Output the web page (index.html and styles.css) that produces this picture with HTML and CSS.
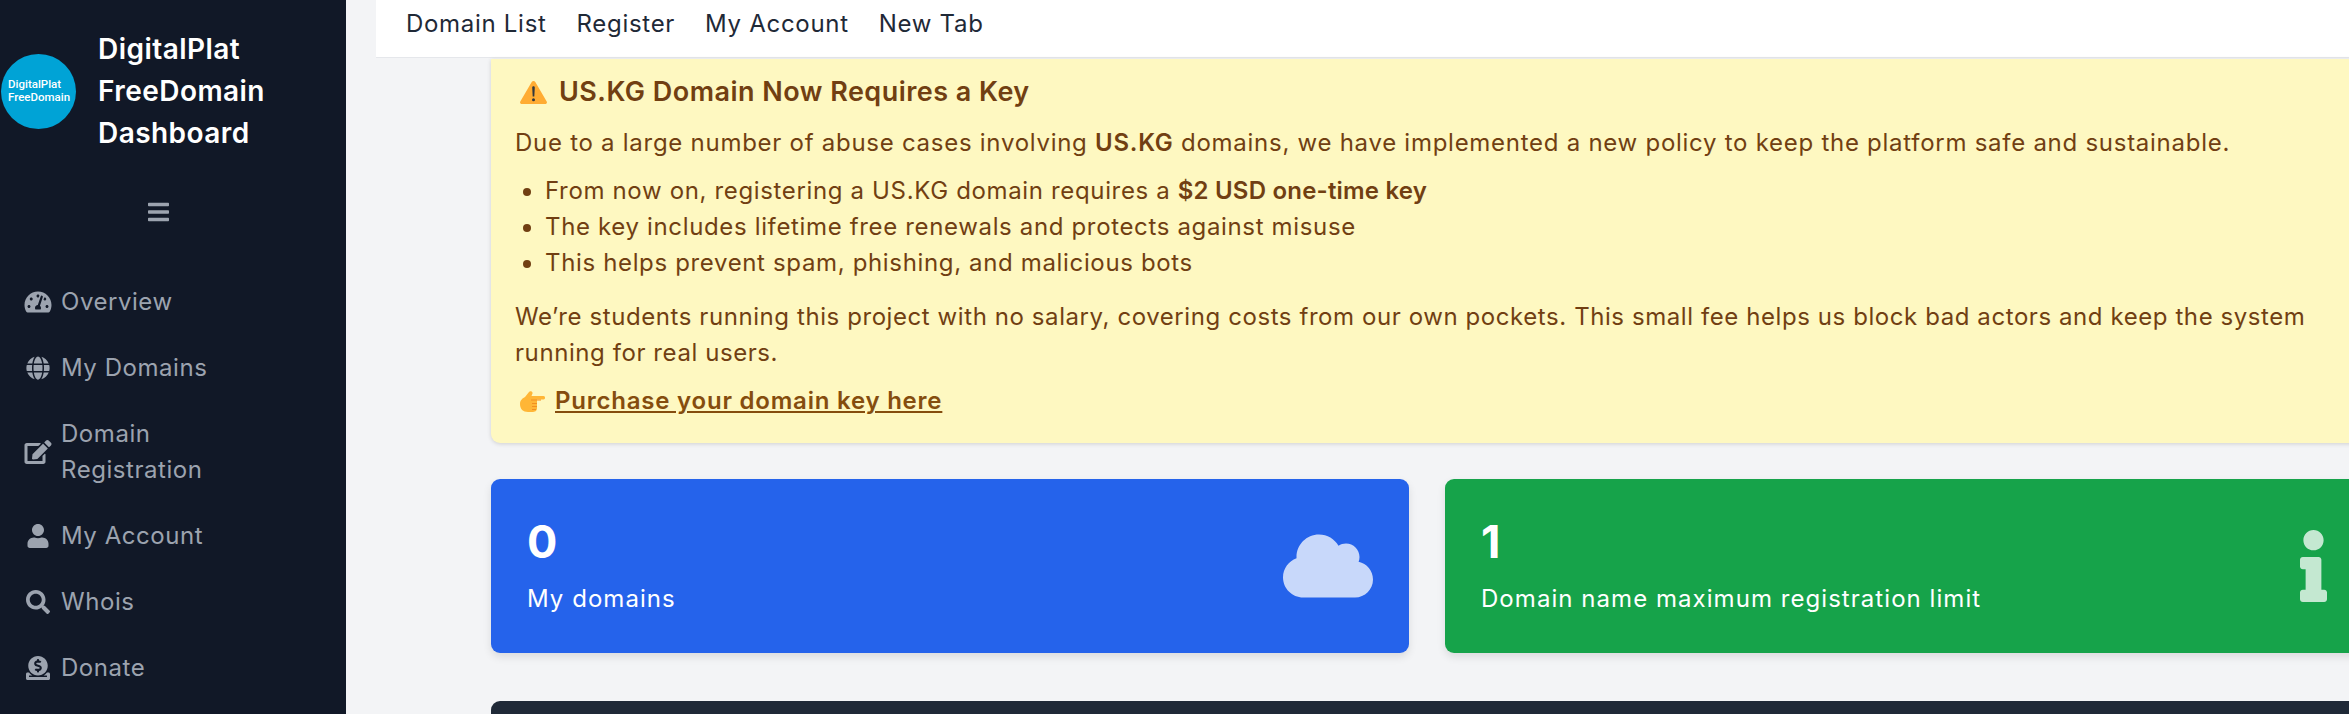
FILE: index.html
```html
<!DOCTYPE html>
<html>
	<head>
		<meta charset="UTF-8"/>
		<title>DigitalPlat FreeDomain Dashboard</title>
		<link rel="stylesheet" href="styles.css">
	</head>
	<body>
		<aside class="sidebar">
			<div class="brand">
				<div class="logo">DigitalPlat<br>FreeDomain</div>
				<div class="brandName">DigitalPlat<br>FreeDomain<br>Dashboard</div>
			</div>
			<div class="toggle">
				<svg class="barsIcon" viewBox="0 0 448 512"><path d="M16 132h416c8.837 0 16-7.163 16-16V76c0-8.837-7.163-16-16-16H16C7.163 60 0 67.163 0 76v40c0 8.837 7.163 16 16 16zm0 160h416c8.837 0 16-7.163 16-16v-40c0-8.837-7.163-16-16-16H16c-8.837 0-16 7.163-16 16v40c0 8.837 7.163 16 16 16zm0 160h416c8.837 0 16-7.163 16-16v-40c0-8.837-7.163-16-16-16H16c-8.837 0-16 7.163-16 16v40c0 8.837 7.163 16 16 16z"/></svg>
			</div>
			<nav class="sideNav">
				<a class="sideItem" href="#">
					<svg class="sideIcon" viewBox="0 0 576 512"><path d="M288 32C128.94 32 0 160.94 0 320c0 52.8 14.25 102.26 39.06 144.8 5.61 9.62 16.3 15.2 27.44 15.2h443c11.14 0 21.83-5.58 27.44-15.2C561.75 422.26 576 372.8 576 320c0-159.06-128.94-288-288-288zm0 64c14.71 0 26.58 10.13 30.32 23.65-1.11 2.26-2.64 4.23-3.45 6.67l-9.22 27.67c-5.13 3.49-10.97 6.01-17.64 6.01-17.67 0-32-14.33-32-32S270.33 96 288 96zM96 384c-17.67 0-32-14.33-32-32s14.33-32 32-32 32 14.33 32 32-14.33 32-32 32zm48-160c-17.67 0-32-14.33-32-32s14.33-32 32-32 32 14.33 32 32-14.33 32-32 32zm246.77-72.41l-61.33 184C343.13 347.33 352 364.54 352 384c0 11.72-3.38 22.55-8.88 32H232.88c-5.5-9.45-8.88-20.28-8.88-32 0-33.94 26.5-61.43 59.9-63.59l61.34-184.01c4.17-12.56 17.73-19.45 30.36-15.17 12.57 4.19 19.35 17.79 15.17 30.36zm14.66 57.2l15.52-46.55c3.47-1.29 7.13-2.23 11.05-2.23 17.67 0 32 14.33 32 32s-14.33 32-32 32c-11.38-.01-20.89-6.25-26.57-15.22zM480 384c-17.67 0-32-14.33-32-32s14.33-32 32-32 32 14.33 32 32-14.33 32-32 32z"/></svg>
					<span>Overview</span>
				</a>
				<a class="sideItem" href="#">
					<svg class="sideIcon" viewBox="0 0 496 512"><path d="M336.5 160C322 70.7 287.8 8 248 8s-74 62.7-88.5 152h177zM152 256c0 22.2 1.2 43.5 3.3 64h185.3c2.1-20.5 3.3-41.8 3.3-64s-1.2-43.5-3.3-64H155.3c-2.1 20.5-3.3 41.8-3.3 64zm324.7-96c-28.6-67.9-86.5-120.4-158-141.6 24.4 33.8 41.2 84.7 50 141.6h108zM177.2 18.4C105.8 39.6 47.8 92.1 19.3 160h108c8.7-56.9 25.5-107.8 49.9-141.6zM487.4 192H372.7c2.1 21 3.3 42.5 3.3 64s-1.2 43-3.3 64h114.6c5.5-20.5 8.6-41.8 8.6-64s-3.1-43.5-8.5-64zM120 256c0-21.5 1.2-43 3.3-64H8.6C3.2 212.5 0 233.8 0 256s3.2 43.5 8.6 64h114.6c-2-21-3.2-42.5-3.2-64zm39.5 96c14.5 89.3 48.7 152 88.5 152s74-62.7 88.5-152h-177zm159.3 141.6c71.4-21.2 129.4-73.7 158-141.6h-108c-8.8 56.9-25.6 107.8-50 141.6zM19.3 352c28.6 67.9 86.5 120.4 158 141.6-24.4-33.8-41.2-84.7-50-141.6h-108z"/></svg>
					<span>My Domains</span>
				</a>
				<a class="sideItem" href="#">
					<svg class="sideIcon" viewBox="0 0 576 512"><path d="M402.6 83.2l90.2 90.2c3.8 3.8 3.8 10 0 13.8L274.4 405.6l-92.8 10.3c-12.4 1.4-22.9-9.1-21.5-21.5l10.3-92.8L388.8 83.2c3.8-3.8 10-3.8 13.8 0zm162-22.9l-48.8-48.8c-15.2-15.2-39.9-15.2-55.2 0l-35.4 35.4c-3.8 3.8-3.8 10 0 13.8l90.2 90.2c3.8 3.8 10 3.8 13.8 0l35.4-35.4c15.2-15.3 15.2-40 0-55.2zM384 346.2V448H64V128h229.8c3.2 0 6.2-1.3 8.5-3.5l40-40c7.6-7.6 2.2-20.5-8.5-20.5H48C21.5 64 0 85.5 0 112v352c0 26.5 21.5 48 48 48h352c26.5 0 48-21.5 48-48V306.2c0-10.7-12.9-16-20.5-8.5l-40 40c-2.2 2.3-3.5 5.3-3.5 8.5z"/></svg>
					<span>Domain<br>Registration</span>
				</a>
				<a class="sideItem" href="#">
					<svg class="sideIcon" viewBox="0 0 448 512"><path d="M224 256c70.7 0 128-57.3 128-128S294.7 0 224 0 96 57.3 96 128s57.3 128 128 128zm89.6 32h-16.7c-22.2 10.2-46.9 16-72.9 16s-50.6-5.8-72.9-16h-16.7C60.2 288 0 348.2 0 422.4V464c0 26.5 21.5 48 48 48h352c26.5 0 48-21.5 48-48v-41.6c0-74.2-60.2-134.4-134.4-134.4z"/></svg>
					<span>My Account</span>
				</a>
				<a class="sideItem" href="#">
					<svg class="sideIcon" viewBox="0 0 512 512"><path d="M505 442.7L405.3 343c-4.5-4.5-10.6-7-17-7H372c27.6-35.3 44-79.7 44-128C416 93.1 322.9 0 208 0S0 93.1 0 208s93.1 208 208 208c48.3 0 92.7-16.4 128-44v16.3c0 6.4 2.5 12.5 7 17l99.7 99.7c9.4 9.4 24.6 9.4 33.9 0l28.3-28.3c9.4-9.4 9.4-24.6.1-34zM208 336c-70.7 0-128-57.2-128-128 0-70.7 57.2-128 128-128 70.7 0 128 57.2 128 128 0 70.7-57.2 128-128 128z"/></svg>
					<span>Whois</span>
				</a>
				<a class="sideItem" href="#">
					<svg class="sideIcon" viewBox="0 0 512 512"><path d="M256 416c114.9 0 208-93.1 208-208S370.9 0 256 0 48 93.1 48 208s93.1 208 208 208zM233.8 97.4V80.6c0-9.2 7.4-16.6 16.6-16.6h11.1c9.2 0 16.6 7.4 16.6 16.6v17c15.5.8 30.5 6.1 43 15.4 5.6 4.1 6.2 12.3 1.2 17.1L306 145.6c-3.8 3.7-9.5 3.8-14 1-5.4-3.4-11.4-5.1-17.8-5.1h-38.9c-9 0-16.3 8.2-16.3 18.3 0 8.2 5 15.5 12.1 17.6l62.3 18.7c25.7 7.7 43.7 32.4 43.7 60.1 0 34-26.4 61.5-59.1 62.4v16.8c0 9.2-7.4 16.6-16.6 16.6h-11.1c-9.2 0-16.6-7.4-16.6-16.6v-17c-15.5-.8-30.5-6.1-43-15.4-5.6-4.1-6.2-12.3-1.2-17.1l16.3-15.5c3.8-3.7 9.5-3.8 14-1 5.4 3.4 11.4 5.1 17.8 5.1h38.9c9 0 16.3-8.2 16.3-18.3 0-8.2-5-15.5-12.1-17.6l-62.3-18.7c-25.7-7.7-43.7-32.4-43.7-60.1.1-34 26.4-61.5 59.1-62.4zM480 352h-32.5c-19.6 26-44.6 47.7-73 64h63.8c5.3 0 9.6 3.6 9.6 8v16c0 4.4-4.3 8-9.6 8H73.6c-5.3 0-9.6-3.6-9.6-8v-16c0-4.4 4.3-8 9.6-8h63.8c-28.4-16.3-53.3-38-73-64H32c-17.7 0-32 14.3-32 32v96c0 17.7 14.3 32 32 32h448c17.7 0 32-14.3 32-32v-96c0-17.7-14.3-32-32-32z"/></svg>
					<span>Donate</span>
				</a>
			</nav>
		</aside>
		<main class="main">
			<nav class="topNav">
				<a href="#">Domain List</a>
				<a href="#">Register</a>
				<a href="#">My Account</a>
				<a href="#">New Tab</a>
			</nav>
			<div class="content">
				<section class="notice">
					<h3 class="noticeTitle">
						<svg class="warnIcon" viewBox="0 0 27 23">
							<path fill="#ffac33" d="M11.7 1C12.400-.3 14.600-.3 15.300 1L26.700 20.500C27.400 21.800 26.600 23 25.200 23H1.800C.4 23-.4 21.800.3 20.500Z"/>
							<path fill="#31373d" d="M12.200 6.500C12.200 4.800 14.800 4.800 14.800 6.500L14.300 15.500H12.700ZM13.500 17.300a1.500 1.500 0 1 1 0 3 1.500 1.500 0 0 1 0-3Z"/>
						</svg>
						<span>US.KG Domain Now Requires a Key</span>
					</h3>
					<p class="introText">Due to a large number of abuse cases involving <b>US.KG</b> domains, we have implemented a new policy to keep the platform safe and sustainable.</p>
					<ul>
						<li>From now on, registering a US.KG domain requires a <b>$2 USD one-time key</b></li>
						<li>The key includes lifetime free renewals and protects against misuse</li>
						<li>This helps prevent spam, phishing, and malicious bots</li>
					</ul>
					<p class="studentText">We’re students running this project with no salary, covering costs from our own pockets. This small fee helps us block bad actors and keep the system<br>running for real users.</p>
					<p class="buyLine">
						<svg class="handIcon" viewBox="0 0 25 21">
							<path fill="#ffb636" d="M0 13C0 9 3 7 5 6L9 1C10-.3 13 .5 12.500 2.500L11.500 5H23.500C25.500 5 25.500 8.500 23.500 8.500H17V17C17 20 15 21 12 21H8C3 21 0 18 0 13Z"/>
							<path fill="#f19020" d="M11 8.500H21V9.500H11ZM12 12H17V13H12ZM12 15H17V16H12ZM12 18H16V19H12Z"/>
						</svg>
						<a href="#">Purchase your domain key here</a>
					</p>
				</section>
				<div class="statRow">
					<div class="statCard blue">
						<div>
							<div class="statNum">0</div>
							<div class="statText">My domains</div>
						</div>
						<svg class="cloudIcon" viewBox="0 0 640 512"><path d="M537.6 226.6c4.1-10.7 6.4-22.4 6.4-34.6 0-53-43-96-96-96-19.7 0-38.1 6-53.3 16.2C367 64.2 315.3 32 256 32c-88.4 0-160 71.6-160 160 0 2.7.1 5.4.2 8.1C40.2 219.8 0 273.2 0 336c0 79.500 64.500 144 144 144h368c70.700 0 128-57.300 128-128 0-61.900-44-113.600-102.400-125.400z"/></svg>
					</div>
					<div class="statCard green">
						<div>
							<div class="statNum">1</div>
							<div class="statText">Domain name maximum registration limit</div>
						</div>
						<svg class="infoIcon" viewBox="0 0 192 512"><path d="M20 424.229h20V279.771H20c-11.046 0-20-8.954-20-20V212c0-11.046 8.954-20 20-20h112c11.046 0 20 8.954 20 20v212.229h20c11.046 0 20 8.954 20 20V492c0 11.046-8.954 20-20 20H20c-11.046 0-20-8.954-20-20v-47.771c0-11.046 8.954-20 20-20zM96 0C56.235 0 24 32.235 24 72s32.235 72 72 72 72-32.235 72-72S135.764 0 96 0z"/></svg>
					</div>
				</div>
				<div class="darkPanel"></div>
			</div>
		</main>
	</body>
</html>
```

FILE: styles.css
```css
html,body{
	margin:0;
	height:714px;
	overflow:hidden;
}
body{
	display:flex;
	background-color:#f3f4f6;
	font-family:"Inter","Liberation Sans",sans-serif;
	font-size:24px;
	line-height:36px;
	letter-spacing:0.7px;
}
a{
	text-decoration:none;
	color:inherit;
}
.sidebar{
	flex:0 0 346px;
	height:714px;
	background-color:#111827;
	color:#9ca3af;
}
.brand{
	display:flex;
	align-items:center;
	padding:28px 0 0 1px;
	gap:22px;
}
.logo{
	flex:0 0 75px;
	height:75px;
	box-sizing:border-box;
	padding-left:7px;
	border-radius:50%;
	background-color:#00a3d6;
	color:white;
	font-family:"Roboto",sans-serif;
	font-size:11.5px;
	font-weight:500;
	line-height:13px;
	letter-spacing:0;
	display:flex;
	align-items:center;
}
.brandName{
	color:white;
	font-size:28px;
	font-weight:600;
	line-height:42px;
	letter-spacing:0.45px;
}
.toggle{
	display:flex;
	justify-content:center;
	margin-top:46px;
	height:24px;
	width:317px;
}
.barsIcon{
	width:21px;
	height:24px;
	fill:#9ca3af;
}
.sideNav{
	margin-top:45px;
	letter-spacing:0.55px;
}
.sideItem{
	display:flex;
	align-items:center;
	padding:15px 0 15px 23px;
	gap:8px;
}
.sideIcon{
	flex:0 0 30px;
	height:24px;
	fill:#9ca3af;
}
.main{
	flex:1;
	min-width:0;
}
.topNav{
	display:flex;
	gap:30px;
	height:58px;
	margin-left:30px;
	padding:6px 0 0 30px;
	box-sizing:border-box;
	background-color:white;
	color:#1f2937;
	border-bottom:1px solid #e5e7eb;
}
.content{
	width:1872px;
	margin-left:145px;
	padding-top:1px;
}
.notice{
	box-sizing:border-box;
	height:384px;
	padding:12px 24px 0;
	background-color:#fef8c1;
	color:#713f12;
	border-radius:0 0 9px 9px;
	box-shadow:0 1px 4px rgba(0,0,0,0.15);
}
.noticeTitle{
	display:flex;
	align-items:center;
	gap:12px;
	margin:0 0 12px;
	font-size:27px;
	font-weight:600;
	line-height:42px;
	letter-spacing:0.47px;
}
.warnIcon{
	width:27px;
	height:23px;
	margin-left:5px;
}
.notice p{
	margin:0 0 12px;
}
.notice .introText{
	letter-spacing:0.73px;
}
.notice .studentText{
	letter-spacing:0.58px;
}
.notice ul{
	margin:0 0 18px;
	padding-left:30px;
	letter-spacing:0.65px;
}
.notice b{
	font-weight:600;
}
.notice li b{
	letter-spacing:0.2px;
}
.buyLine{
	display:flex;
	align-items:center;
	gap:10px;
}
.buyLine a{
	color:#854d0e;
	font-weight:600;
	text-decoration:underline;
	letter-spacing:0.78px;
}
.handIcon{
	width:25px;
	height:21px;
	margin-left:5px;
}
.statRow{
	display:flex;
	gap:36px;
	margin-top:36px;
}
.statCard{
	flex:0 0 918px;
	box-sizing:border-box;
	height:174px;
	padding:36px;
	display:flex;
	justify-content:space-between;
	align-items:center;
	color:white;
	border-radius:9px;
	box-shadow:0 4px 9px rgba(0,0,0,0.1);
}
.blue{
	background-color:#2563eb;
}
.green{
	background-color:#16a34a;
}
.statNum{
	font-size:45px;
	font-weight:700;
	line-height:54px;
	margin-bottom:12px;
	letter-spacing:0;
}
.statText{
	letter-spacing:1.05px;
}
.cloudIcon{
	width:90px;
	height:72px;
	fill:white;
	opacity:0.75;
}
.infoIcon{
	width:27px;
	height:72px;
	fill:white;
	opacity:0.75;
}
.darkPanel{
	height:13px;
	margin-top:48px;
	background-color:#1f2937;
	border-radius:9px 9px 0 0;
}
```
